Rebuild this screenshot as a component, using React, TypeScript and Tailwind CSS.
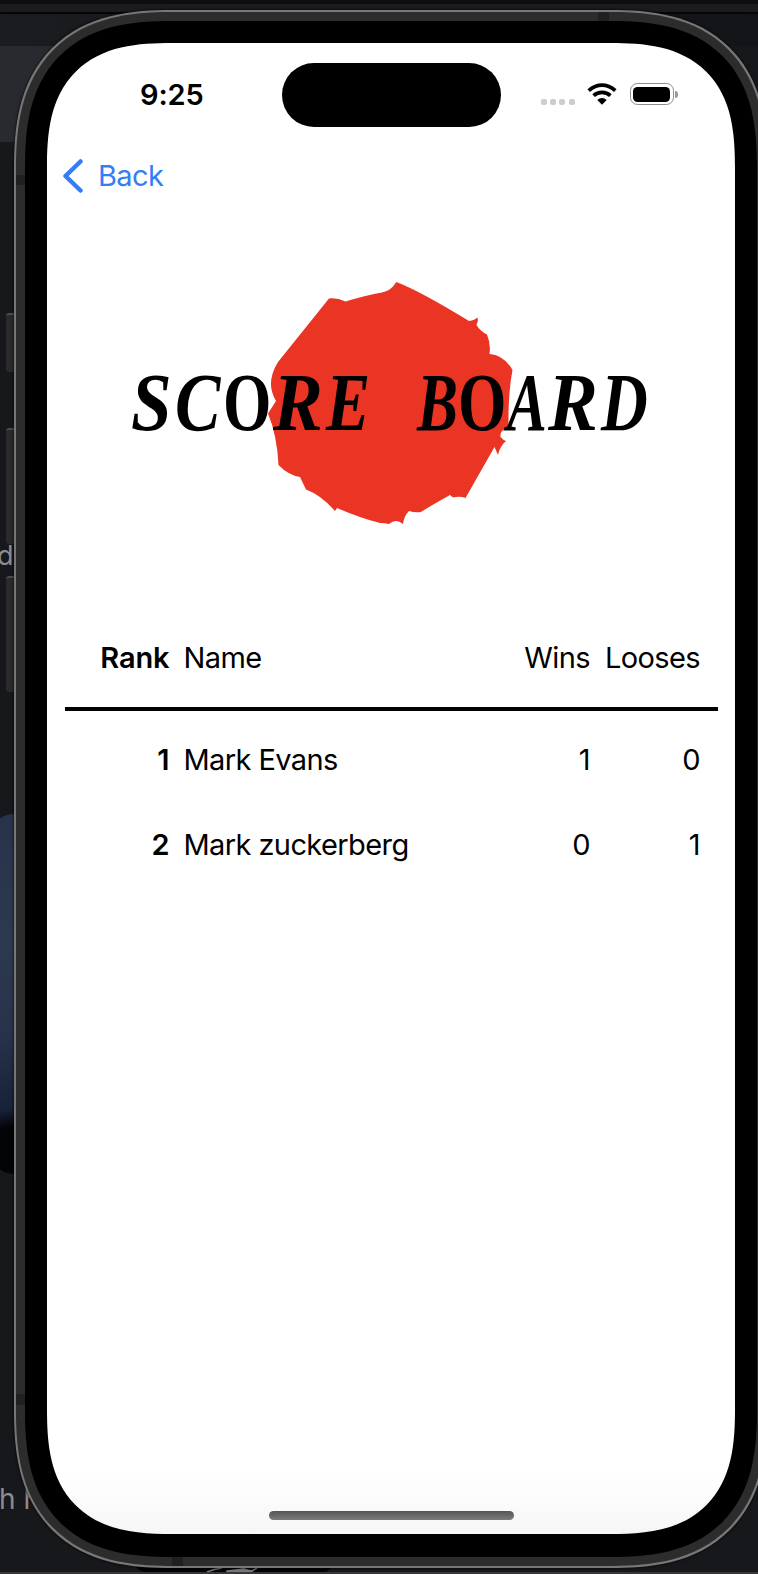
import type { ReactNode } from "react";

const players = [
  { rank: 1, name: "Mark Evans", wins: 1, losses: 0 },
  { rank: 2, name: "Mark zuckerberg", wins: 0, losses: 1 },
];

function Row({ cells, className }: { cells: ReactNode[]; className: string }) {
  return (
    <div className={`flex items-center text-[29px] tracking-[-0.6px] ${className}`}>
      <div className="w-[105px] text-right font-semibold tracking-[-0.1px]">{cells[0]}</div>
      <div className="ml-[14px] flex-1 whitespace-nowrap">{cells[1]}</div>
      <div className="w-[100px] text-right">{cells[2]}</div>
      <div className="mr-[17.500px] w-[110px] text-right">{cells[3]}</div>
    </div>
  );
}

function StatusBar() {
  return (
    <div className="flex h-[84px] items-start pt-5">
      <div className="ml-[93px] mt-[14px] w-[141.500px] text-[29px] font-semibold leading-[36px] tracking-[-0.1px]">9:25</div>
      <div className="h-[64px] w-[219px] rounded-full bg-black" />
      <div className="ml-[40px] mt-[31px] flex gap-[3.4px] pt-[5px]">
        <i className="size-[6px] rounded-[2px] bg-[#cdcdcd]" />
        <i className="size-[6px] rounded-[2px] bg-[#cdcdcd]" />
        <i className="size-[6px] rounded-[2px] bg-[#cdcdcd]" />
        <i className="size-[6px] rounded-[2px] bg-[#cdcdcd]" />
      </div>
      <svg className="ml-[12px] mt-[20px]" width="30" height="22" viewBox="0 0 30 22" fill="none" stroke="#000" strokeWidth="3.8">
        <path d="M1.7 7.6Q8 2.2 15 2.2T28.300 7.600" />
        <path d="M6.600 12.600Q10.200 9.400 15 9.400T23.400 12.600" />
        <path d="M15 21.700L10.300 17Q12.400 15 15 15T19.700 17Z" fill="#000" stroke="none" />
      </svg>
      <div className="ml-[13px] mt-[20px] flex items-center">
        <div className="h-[22px] w-[44px] rounded-[7.500px] border border-[#8c8c8c] p-[2.500px]">
          <div className="h-full rounded-[4.500px] bg-black" />
        </div>
        <div className="ml-[1.500px] h-[7px] w-[2.500px] rounded-r-full bg-[#999]" />
      </div>
    </div>
  );
}

function Title() {
  return (
    <div className="ml-[84px] mt-[84px] grid h-[244px] w-[520px]">
      <svg className="col-start-1 row-start-1 ml-[136px]" width="248" height="244" viewBox="267 281 248 244">
        <path
          fill="#ea3525"
          d="M396.300 282Q420 291 469 321Q475 320 477 317.500Q479 319 476.500 325Q480 331 487 334.500Q491 344 489.500 354Q504 355 512.500 370Q508 393 508.500 429L504 430Q500 431 500.500 437Q503 440 506 441Q500 446 498 455L494.500 447L465.500 498Q460 496 453 497.500L450 495Q432 505 421 512Q415 513 409 511Q404 516 403 524Q396 518 389 524Q385 523 380 523Q360 518 337 508L335 511Q321 495 306 489.500L300 477Q288 475 278.500 465Q277 435 268 413.500L276 401Q265 383 278 362L329 298.500Q337 297.500 345.500 301.500Q367 295 382 292.500Q391 291 396.300 282Z"
        />
      </svg>
      <h1 className="col-start-1 row-start-1 flex items-start pt-[80px] font-['Liberation_Serif'] text-[83px] font-bold italic leading-[83px] text-black">
        <span className="w-[44px] origin-left scale-x-[0.88]">S</span>
        <span className="w-[48px] origin-left scale-x-[0.82]">C</span>
        <span className="w-[50px] origin-left scale-x-[0.75] not-italic">O</span>
        <span className="w-[53px] origin-left scale-x-[0.9]">R</span>
        <span className="w-[91px] origin-left scale-x-[0.8]">E</span>
        <span className="w-[41px] origin-left scale-x-[0.74]">B</span>
        <span className="w-[49px] origin-left scale-x-[0.75] not-italic">O</span>
        <span className="w-[41px] origin-left scale-x-[0.72]">A</span>
        <span className="w-[53px] origin-left scale-x-[0.9]">R</span>
        <span className="w-[47px] origin-left scale-x-[0.78]">D</span>
      </h1>
    </div>
  );
}

export default function App() {
  return (
    <div className="relative h-[1574px] w-[758px] overflow-hidden bg-[#17181b] font-['Inter',sans-serif] text-black">
      <div className="h-[4px] bg-[#0e0e11]" />
      <div className="h-[8px] bg-[#1b1b20]" />
      <div className="h-[2px] bg-[#050506]" />
      <div className="h-[32px] bg-gradient-to-r from-[#1b1c1f] to-[#121418]" />
      <div className="h-[96px] w-[120px] bg-[#292a2f]" />
      <div className="absolute -left-[3px] top-[539px] text-[27px] leading-[34px] text-[#8b8c8e]">d</div>
      <div className="absolute -left-[10px] top-[814px] h-[360px] w-[70px] rounded-[24px] bg-[linear-gradient(170deg,#28334b_0%,#2c394e_35%,#28334b_60%,#172239_80%,#030408_85%,#030408_100%)]" />
      <div className="absolute -left-[1px] top-[1481px] text-[28px] leading-[36px] text-[#8b8c8e]">h h</div>
      <div className="absolute left-[134px] top-[1560px] h-[12px] w-[200px] rounded-b-[16px] bg-[#020203]" />
      <svg className="absolute left-[205px] top-[1566px]" width="60" height="8" viewBox="0 0 60 8" stroke="#77797a" strokeWidth="1.500" fill="none">
        <path d="M2 6Q9 3 17 2M32 0L40 3M52 2L45 6" />
        <path d="M22 5L38 3L47 5V8H22Z" fill="#77797a" />
      </svg>
      <div className="absolute left-0 top-[1572px] h-[2px] w-full bg-[#37373a]" />
      <div className="absolute left-[6px] top-[313px] h-[59px] w-[10px] rounded-l-[3px] border-t-2 border-[#4c4c4c] bg-[#2a2a2a]" />
      <div className="absolute left-[6px] top-[428px] h-[116px] w-[10px] rounded-l-[3px] border-t-2 border-[#4c4c4c] bg-[#2a2a2a]" />
      <div className="absolute left-[6px] top-[576px] h-[116px] w-[10px] rounded-l-[3px] border-t-2 border-[#4c4c4c] bg-[#2a2a2a]" />

      <div className="absolute left-[14px] top-[10px] h-[1558px] w-[754px] rounded-[158px] border-2 border-[#777] bg-[#2c2c2c] p-[9px] shadow-[0_0_3px_#000] [corner-shape:superellipse(1.33)]">
        <div className="absolute left-0 top-[163px] h-[10px] w-[9px] bg-[#202020]" />
        <div className="absolute left-0 top-[1382px] h-[11px] w-[9px] bg-[#202020]" />
        <div className="absolute left-[582px] top-0 h-[9px] w-[11px] bg-[#202020]" />
        <div className="absolute bottom-0 left-[156px] h-[9px] w-[11px] bg-[#202020]" />
        <div className="relative h-full rounded-[147px] bg-black px-[22px] pb-[23px] pt-[22px] [corner-shape:superellipse(1.36)]">
          <div className="flex h-full flex-col rounded-[125px] bg-gradient-to-b from-white from-96% to-[#f6f6f6] [corner-shape:superellipse(1.41)]">
            <StatusBar />
            <div className="mt-[28px] flex h-[42px] items-center text-[#357df6]">
              <svg className="ml-[16px]" width="21" height="34" viewBox="0 0 21 34" fill="none" stroke="currentColor" strokeWidth="4.500" strokeLinecap="round" strokeLinejoin="round">
                <path d="M17.500 2.500L2.500 17L17.500 31.500" />
              </svg>
              <span className="ml-[14px] text-[29px] tracking-[-0.6px]">Back</span>
            </div>
            <Title />
            <div className="ml-[17.500px] mt-[83px] w-[653px]">
              <Row className="h-[103px] border-b-4 border-black" cells={["Rank", "Name", "Wins", "Looses"]} />
              <div className="pt-[6px]">
                {players.map((p) => (
                  <Row key={p.rank} className="h-[85px]" cells={[p.rank, p.name, p.wins, p.losses]} />
                ))}
              </div>
            </div>
            <div className="mx-auto mb-[14px] mt-auto h-[9px] w-[245px] rounded-full bg-gradient-to-b from-[#555] to-[#7c7c7c]" />
          </div>
        </div>
      </div>
    </div>
  );
}
